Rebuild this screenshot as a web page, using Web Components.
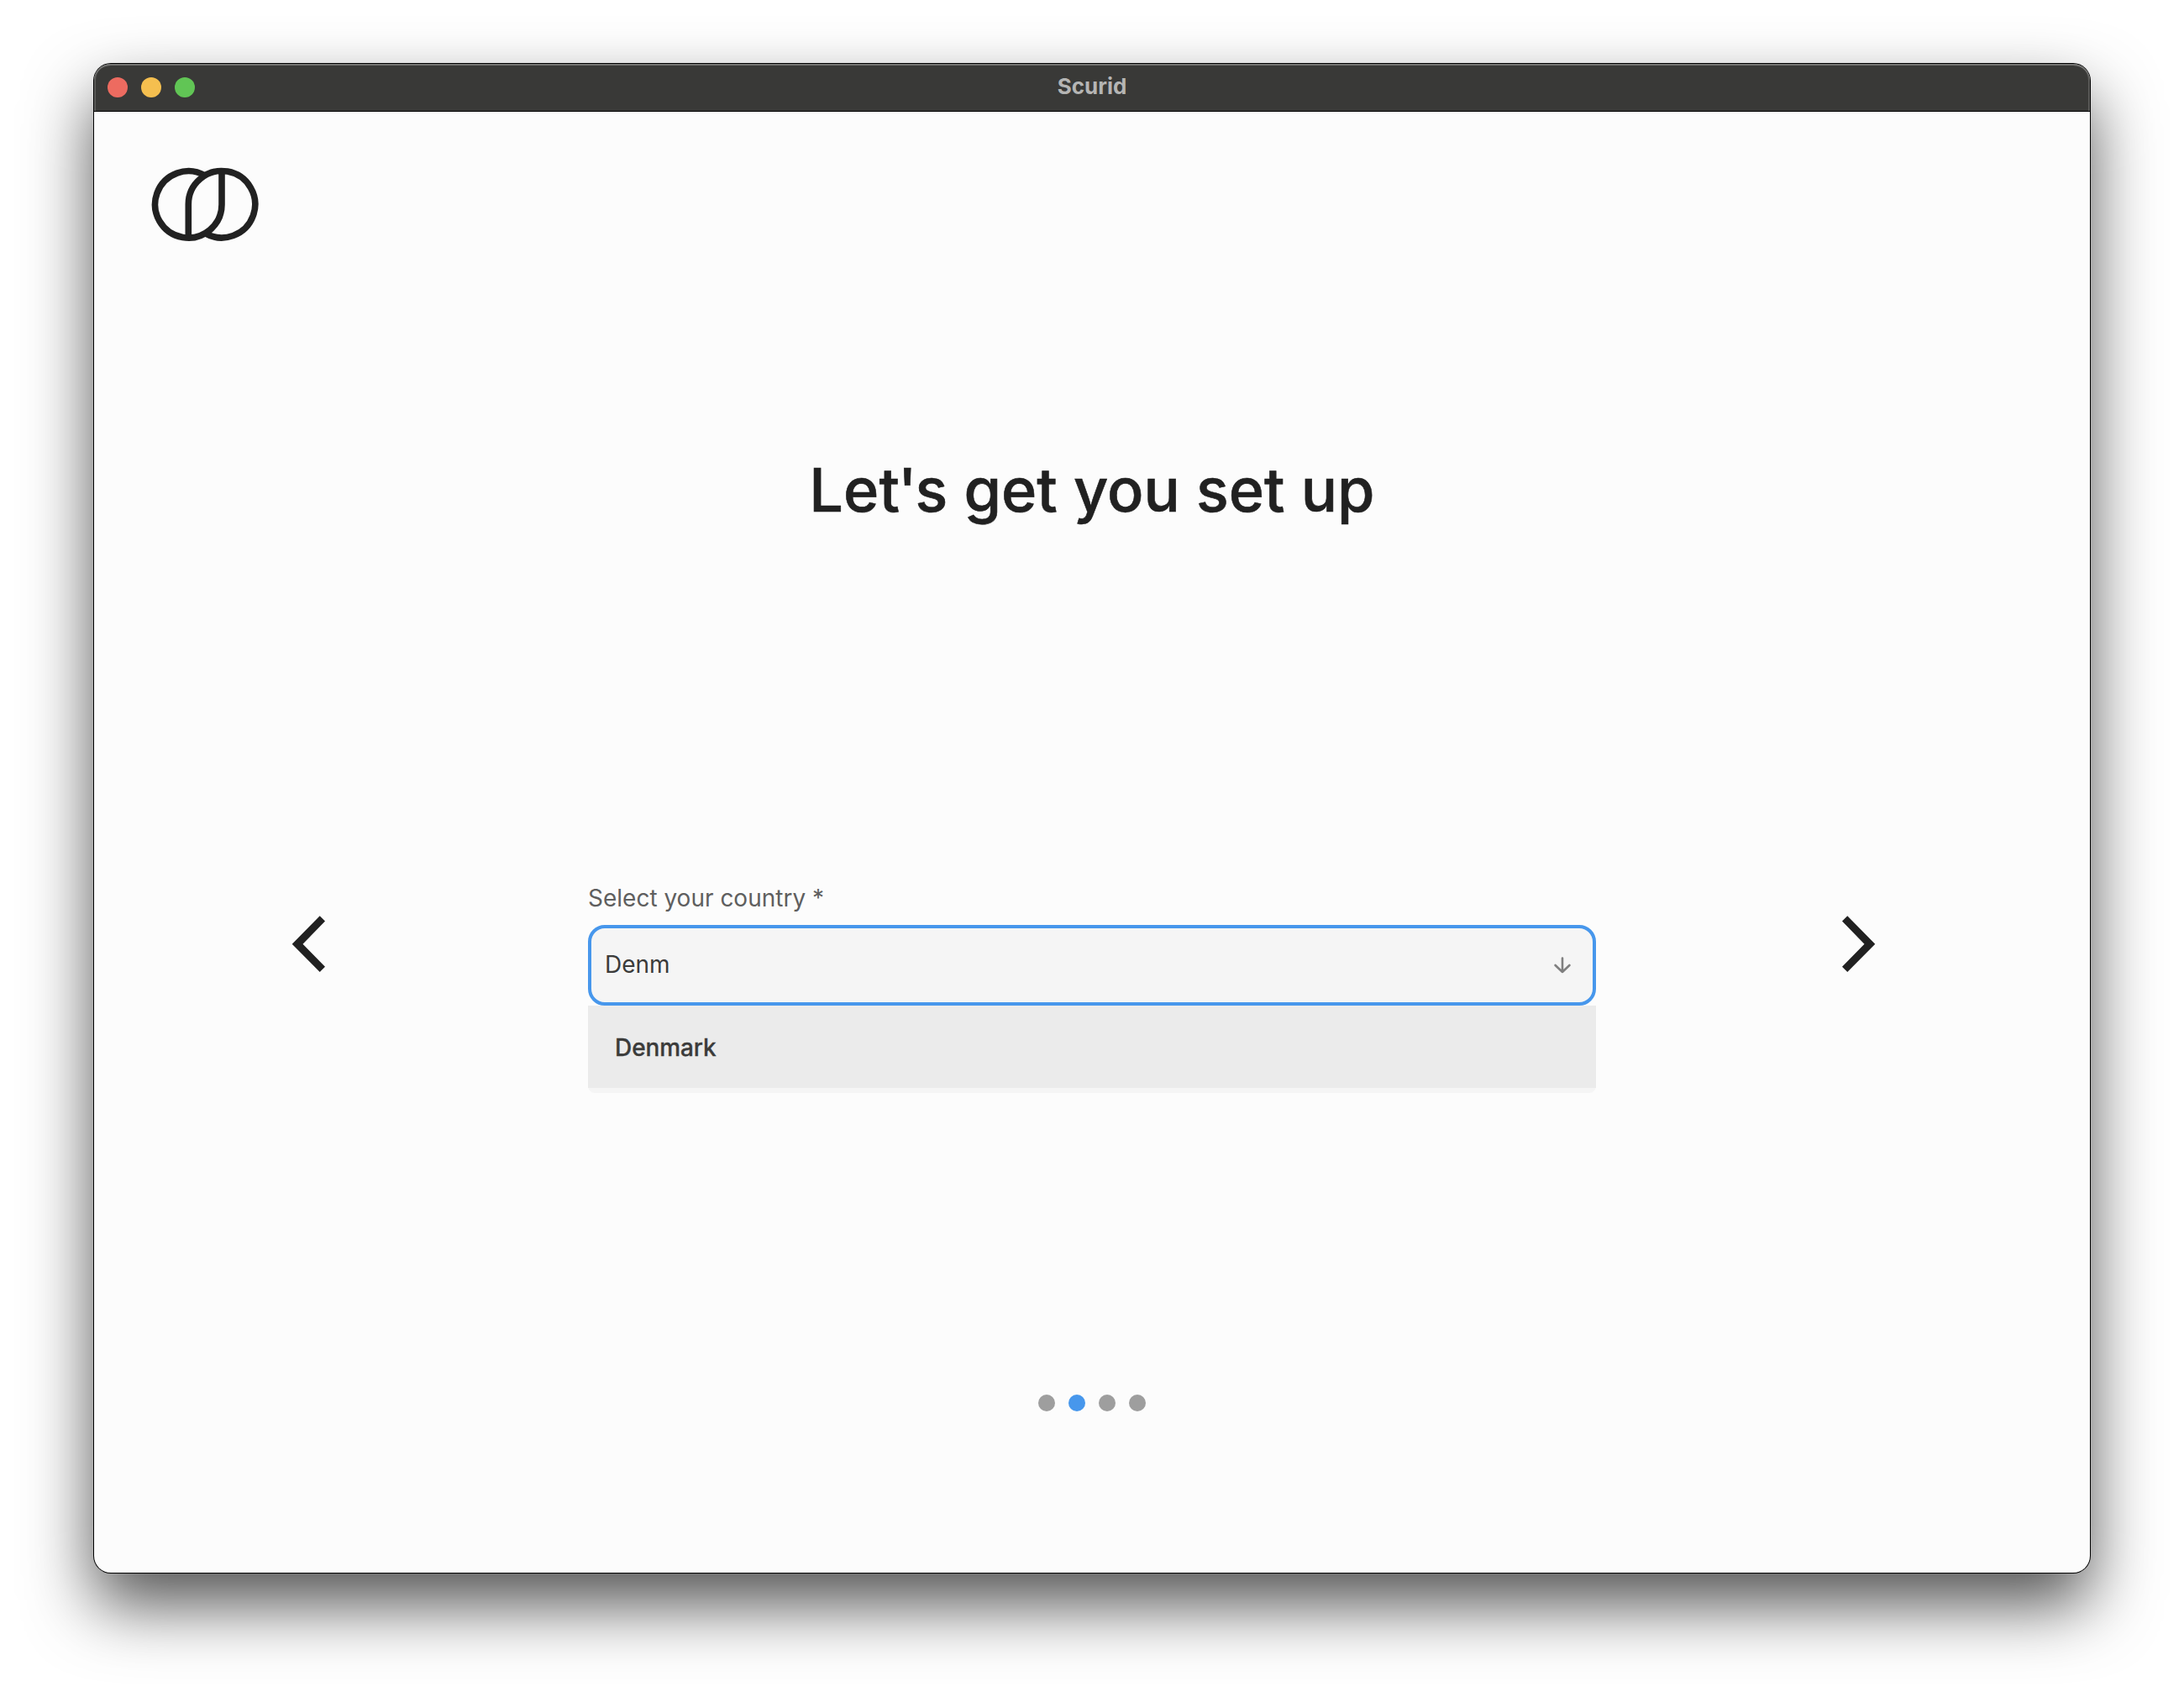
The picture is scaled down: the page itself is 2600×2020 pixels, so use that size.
<!DOCTYPE html>
<html lang="en">
<head>
<meta charset="utf-8">
<title>Scurid</title>
<style>
html,body{margin:0;width:2600px;height:2020px;background:#fff;overflow:hidden}
body{font-family:Inter,"Liberation Sans",sans-serif;color:#212121}
</style>
</head>
<body>
<setup-page></setup-page>
<script>
const define = (name, css, html) => customElements.define(name, class extends HTMLElement {
  constructor() {
    super();
    this.attachShadow({ mode: 'open' }).innerHTML =
      `<style>*{box-sizing:border-box}:host{display:block;box-sizing:border-box}${css}</style>${html}`;
  }
});

define('traffic-lights', `
  :host{display:flex;gap:16px}
  i{width:24px;height:24px;border-radius:50%}`,
  `<i style="background:#ed6b60"></i><i style="background:#f5bf4f"></i><i style="background:#61c555"></i>`);

define('title-bar', `
  :host{display:grid;grid-template-columns:1fr auto 1fr;align-items:center;height:57px;padding:0 16px;
    background:#393937;border-bottom:1px solid #000;
    box-shadow:inset 0 2px 0 #747472,inset 2px 0 0 #5b5b59,inset -2px 0 0 #5b5b59;border-radius:20px 20px 0 0}
  b{font-size:26px;line-height:32px;padding-bottom:2px;font-weight:700;color:#b5b5b4}`,
  `<traffic-lights></traffic-lights><b><slot></slot></b><span></span>`);

define('brand-logo', `svg{display:block;overflow:visible}`,
  `<svg width="128" height="88" viewBox="180 200 128 88" fill="none" stroke="#212121" stroke-width="7.6">
    <path d="M244.15 209A39.7 39.7 0 1 0 264 243.3V203.6"/>
    <path d="M224.3 283V243.3A39.7 39.7 0 1 1 244.15 277.6"/>
  </svg>`);

define('nav-arrow', `:host{width:40px}:host([next]){transform:scaleX(-1)}svg{display:block;overflow:visible}`,
  `<svg width="40" height="68" viewBox="0 0 40 68"><path d="M33.7 .3L40 6.6L13.5 33.7L40 60.8L33.7 67.1L.7 33.7Z" fill="#212121"/></svg>`);

define('country-select', `
  :host{width:1200px}
  label{display:block;font-size:28px;line-height:36px;color:#5f5f5f;margin-bottom:14px}
  .field{display:flex;align-items:center;justify-content:space-between;height:96px;padding:0 26px 2px 16px;
    border:4px solid #4797ec;border-radius:20px;background:#f5f5f5;font-size:28px;color:#3b3b3a}
  .field svg{margin-top:2px}
  .menu{padding-bottom:6px;border-radius:0 0 8px 8px;background:#f5f5f5}
  .option{display:flex;align-items:center;height:98px;padding:2px 32px 0;background:#ebebeb;
    font-size:28px;font-weight:500;color:#3b3b3a;letter-spacing:-.08px;-webkit-text-stroke:.3px #3b3b3a}`,
  `<label><slot></slot></label>
   <div class="field"><span>Denm</span>
     <svg width="20" height="20" viewBox="0 0 20 20" fill="none" stroke="#7f7f7f" stroke-width="2.6" stroke-linecap="round" stroke-linejoin="round"><path d="M10 1.6V18M1.6 10L10 18L18.4 10"/></svg>
   </div>
   <div class="menu"><div class="option">Denmark</div></div>`);

define('step-dots', `
  :host{display:flex;gap:16px}
  i{width:20px;height:20px;border-radius:50%;background:#9e9e9e}
  .on{background:#4797ec}`,
  `<i></i><i class="on"></i><i></i><i></i>`);

define('app-window', `
  :host{display:flex;flex-direction:column;width:2376px;height:1796px;background:#fcfcfc;border-radius:20px;
    box-shadow:0 0 0 1px #000,0 38px 80px rgba(0,0,0,.68)}
  main{flex:1;display:flex;flex-direction:column;align-items:center}
  brand-logo{align-self:flex-start;margin:67px 0 0 68px}
  h1{margin:251px 0 0;font-size:72px;line-height:88px;font-weight:500;color:#212121;-webkit-text-stroke:.6px #212121}
  .tight{letter-spacing:-2px}
  .row{align-self:stretch;display:flex;justify-content:space-between;padding:0 255px 0 235px;margin-top:424px}
  nav-arrow{margin-top:39px}
  country-select{margin-left:20px}
  step-dots{margin-top:359px}`,
  `<title-bar>Scurid</title-bar>
   <main>
     <brand-logo></brand-logo>
     <h1>Le<span class="tight">t'</span>s get you set up</h1>
     <div class="row"><nav-arrow></nav-arrow><country-select>Select your country *</country-select><nav-arrow next></nav-arrow></div>
     <step-dots></step-dots>
   </main>`);

define('setup-page', `:host{display:flex;padding:76px 112px;width:2600px;height:2020px}`, `<app-window></app-window>`);
</script>
</body>
</html>
